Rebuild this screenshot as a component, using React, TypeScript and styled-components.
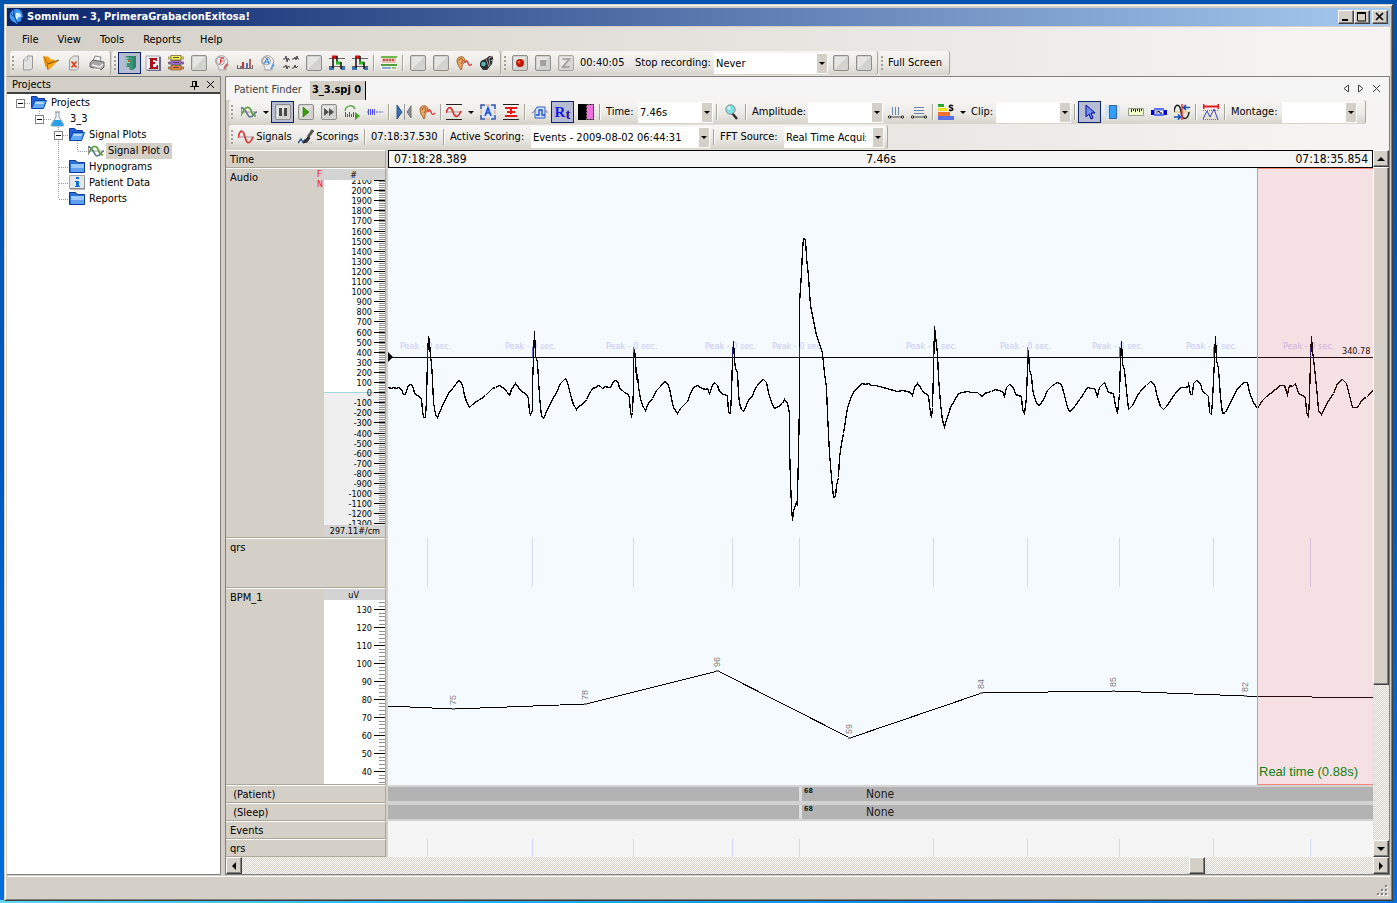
import React, { ReactNode } from 'react';
import styled, { createGlobalStyle, css } from 'styled-components';

const face = '#d4d0c8';
const shadow = '#808080';
const ui = '"DejaVu Sans Condensed", "DejaVu Sans", "Liberation Sans", sans-serif';

const Global = createGlobalStyle`
  *, *::before, *::after { box-sizing: border-box; }
  body { margin: 0; font-family: ${ui}; font-size: 11px; line-height: 14px; color: #000; }
  button, select { font: inherit; color: inherit; }
  ul { list-style: none; margin: 0; padding: 0; }
`;

/* ---------- window frame ---------- */

const Desktop = styled.div`
  min-height: 100vh;
  display: flex;
  padding: 4px 4px 2px;
  background:
    linear-gradient(90deg, #5fd8f5, #22b4f0 35%, #0a84ea 70%, #0070dc) bottom / 100% 3px no-repeat,
    linear-gradient(180deg, #0054b0, #0058c0 50%, #0070dc);
`;

const Window = styled.div`
  flex: 1;
  min-width: 0;
  display: flex;
  flex-direction: column;
  background: ${face};
  border: 1px solid;
  border-color: ${face} #404040 #404040 ${face};
  box-shadow: inset 1px 1px #fff, inset -1px -1px ${shadow};
  padding: 3px 2px 2px;
`;

const TitleBar = styled.header`
  display: flex;
  align-items: center;
  gap: 2px;
  height: 18px;
  padding: 0 2px;
  background: linear-gradient(90deg, #0a246a, #a6caf0);
`;

const Title = styled.h1`
  flex: 1;
  margin: 0;
  font-size: 11px;
  line-height: 14px;
  font-weight: 700;
  color: #fff;
`;

const raised = css`
  background: ${face};
  border: 1px solid;
  border-color: #fff #404040 #404040 #fff;
  box-shadow: inset -1px -1px ${shadow};
`;

const CaptionButton = styled.button<{ $apart?: boolean }>`
  ${raised}
  display: grid;
  place-items: center;
  width: 16px;
  height: 14px;
  padding: 0;
  margin-left: ${(p) => (p.$apart ? '0' : '-2px')};
`;

const Chrome = styled.div`
  background: linear-gradient(90deg, ${face}, #e6e4df 55%, #f5f4f2 95%);
  border-top: 1px solid ${face};
`;

const MenuBar = styled.nav`
  display: flex;
  align-items: center;
  gap: 1px;
  height: 24px;
  padding: 1px 6px 0;
`;

const MenuItem = styled.button`
  border: 0;
  background: none;
  padding: 4px 9px;
  line-height: 14px;
`;

/* ---------- tool strips ---------- */

const StripRow = styled.div`
  display: flex;
  gap: 1px;
  height: 25px;
  padding-left: 3px;
`;

const Strip = styled.div<{ $tail?: number }>`
  display: flex;
  align-items: center;
  height: 24px;
  padding: 0 ${(p) => p.$tail ?? 2}px 0 6px;
  border-radius: 3px;
  border-right: 1px solid #aaa79f;
  position: relative;
  background: linear-gradient(180deg, #f7f6f4, #eceae6 55%, #d6d3cb);
  &::before {
    content: '';
    position: absolute;
    left: 2px;
    top: 5px;
    width: 2px;
    height: 15px;
    background: repeating-linear-gradient(180deg, #a5a298 0 2px, transparent 2px 4px);
  }
`;

const ToolButton = styled.button<{ $on?: boolean; $w?: number }>`
  display: flex;
  align-items: center;
  justify-content: center;
  gap: 2px;
  flex: none;
  width: ${(p) => (p.$w ? p.$w + 'px' : '23px')};
  height: 22px;
  padding: 0;
  border: 1px solid ${(p) => (p.$on ? '#0a246a' : 'transparent')};
  background: ${(p) => (p.$on ? '#b6bdd2' : 'transparent')};
  white-space: nowrap;
`;

const Divider = styled.span`
  flex: none;
  width: 2px;
  height: 16px;
  margin: 0 2px;
  border-left: 1px solid #a5a298;
  border-right: 1px solid #fff;
`;

const Caption = styled.label<{ $w: number }>`
  flex: none;
  width: ${(p) => p.$w}px;
  padding-left: 3px;
  white-space: nowrap;
`;

const PickBox = styled.span<{ $w: number }>`
  flex: none;
  display: block;
  position: relative;
  width: ${(p) => p.$w}px;
  height: 21px;
  margin-right: 1px;
  background: #fff;
  &::after {
    content: '';
    position: absolute;
    right: 1px;
    top: 1px;
    width: 10px;
    height: 19px;
    background: ${face};
    pointer-events: none;
  }
  &::before {
    content: '';
    position: absolute;
    z-index: 1;
    right: 3px;
    top: 9px;
    border: 3px solid transparent;
    border-top-color: #000;
    border-bottom: 0;
    pointer-events: none;
  }
`;

const PickSelect = styled.select`
  appearance: none;
  display: block;
  width: 100%;
  height: 21px;
  padding: 1px 18px 0 2px;
  border: 0;
  border-radius: 0;
  background: transparent;
  overflow: hidden;
`;

const DropArrow = styled.i`
  border: 3px solid transparent;
  border-top-color: #000;
  border-bottom: 0;
  margin-left: 4px;
`;

const Pick = ({ id, w, value, label }: { id: string; w: number; value: string; label?: string }) => (
  <PickBox $w={w}>
    <PickSelect id={id} defaultValue={value} aria-label={label}>
      <option>{value}</option>
    </PickSelect>
  </PickBox>
);

/* ---------- icons ---------- */

const blank = (
  <g>
    <rect x="0.5" y="0.5" width="15" height="15" rx="1.5" fill="#d2d2d0" stroke="#8f8f8c" />
    <path d="M2 2h12L2 14z" fill="#e6e6e4" />
  </g>
);

const glyphs: Record<string, ReactNode> = {
  blank,
  page: (
    <g>
      <path d="M3.500 4.500l4-3.500h5v12l-2 2h-7z" fill="#e2e2e2" stroke="#9a9a9a" />
      <path d="M3.500 5h4V1" fill="#fff" stroke="#aaa" />
    </g>
  ),
  open: (
    <g>
      <path d="M0 1l6 1 1 2 5 1-7 9-3-3z" fill="#f59a10" />
      <path d="M4 9l12-4L6 15z" fill="#f7a81c" />
      <path d="M1 2l3 6 1 7" stroke="#b86400" fill="none" />
      <path d="M5 9l11-4" stroke="#5a3000" fill="none" strokeWidth=".8" />
    </g>
  ),
  closePage: (
    <g>
      <path d="M3.500 4.500l4-3.500h5v12l-2 2h-7z" fill="#e2e2e2" stroke="#9a9a9a" />
      <path d="M5.500 6.500l5 6M10.500 6.500l-5 6" stroke="#e04010" strokeWidth="1.700" />
    </g>
  ),
  printer: (
    <g>
      <path d="M4 6l2-5 6 1-1 5" fill="#f4f4f4" stroke="#888" />
      <path d="M1 8l3-3 11 2v5l-3 3-11-3z" fill="#a8a8a8" stroke="#666" />
      <path d="M3 10l8 2 3-3M5 14l6 1" stroke="#f0f0f0" fill="none" strokeWidth="1.500" />
    </g>
  ),
  book: (
    <g>
      <path d="M3 2l2-1h9v11l-3 3H9V4H3z" fill="#2f8068" />
      <path d="M3 2h8v13H8l-1-3H4z" fill="#3c9478" />
      <path d="M3 2v8l2 2V4l3-1z" fill="#8cc8b0" />
      <path d="M5 5h3v3H5z" fill="#9cd0a8" /><path d="M6 5h2v2H6z" fill="#e05030" />
    </g>
  ),
  boldE: (
    <g>
      <path d="M1 1h14v14H1z" fill="#f1eef4" stroke="#a6a2b8" />
      <path d="M14 2h2v14H2v-1h12z" fill="#6c6a8c" />
      <path d="M4 3h8v3h-1l-1-1H8v2h2v2H8v3h3l1-2h1v4H4v-1h1V4H4z" fill="#a8101c" />
    </g>
  ),
  bands: (
    <g>
      {[['#f4ee58', 1], ['#a06ad8', 6], ['#f08c40', 11]].map(([c, y]) => (
        <g key={String(y)}>
          <rect x="0" y={Number(y) + 1} width="16" height="2" fill={String(c)} stroke="#5a4a4a" strokeWidth=".5" />
          <rect x="3" y={Number(y) - 0.5} width="10" height="4.500" fill={String(c)} stroke="#6a5a30" strokeWidth=".7" />
          <path d={`M5 ${Number(y) + 1.5}h6`} stroke="#333" strokeWidth=".8" />
        </g>
      ))}
    </g>
  ),
  headRed: (
    <g fill="none" stroke="#a0a0a0">
      <path d="M12 15v-3l2-1-1-3 1-1C13 2 9 0 6 1 2 2 1 5 2 8c1 2 3 3 3 7z" fill="#eee" />
      <circle cx="6.500" cy="6" r="4" /><path d="M6 9l1-6h3M6 6h3" stroke="#e02020" />
      <path d="M10 14c2-3 1-4 4-5" stroke="#d06060" strokeWidth="2" />
    </g>
  ),
  headBlue: (
    <g fill="none" stroke="#a0a0a0">
      <path d="M12 15v-3l2-1-1-3 1-1C13 2 9 0 6 1 2 2 1 5 2 8c1 2 3 3 3 7z" fill="#eee" />
      <circle cx="6.500" cy="6" r="4" /><path d="M4 9l3-6 2 6M5 7h4" stroke="#2080d0" />
      <path d="M11 14c2-3 1-4 3-5" stroke="#60a8d8" strokeWidth="2" />
    </g>
  ),
  bars: (
    <g>
      <path d="M1 13.500h14" stroke="#707070" />
      <path d="M3 11h2v2H3z" fill="#777" /><path d="M5 7h2v6H5z" fill="#c83030" />
      <path d="M9 8h2v5H9z" fill="#5570b8" /><path d="M12 4h2v9h-2z" fill="#b86060" />
      <path d="M.500 10v4M15.500 10v4" stroke="#666" />
    </g>
  ),
  quadWave: (
    <path d="M0 4h2l1-3 1 6 1-4 1 2h1M9 4h2l1-2 1 3 1-4 1 3h1M0 12h2l1-2 1 4 1-3 1 1h1M9 13h2l1-3 1 3 2-2" stroke="#444" fill="none" />
  ),
  steps: (
    <g fill="none">
      <path d="M0 3.500h16M0 11.500h16" stroke="#666" />
      <path d="M0 13.500h5M12 13.500h4" stroke="#3a78b8" strokeWidth="3" />
      <path d="M4 13V2" stroke="#111" strokeWidth="1.500" />
      <path d="M3 2h5" stroke="#d01010" strokeWidth="3" />
      <path d="M8 1v7" stroke="#111" strokeWidth="1.500" />
      <path d="M7 8h5" stroke="#20c020" strokeWidth="3" />
      <path d="M12 7v7" stroke="#111" strokeWidth="1.500" />
    </g>
  ),
  calendar: (
    <g>
      <path d="M0 1h16v14H0z" fill="#f4f4e8" />
      <path d="M0 1h16v2H0z" fill="#70b850" /><path d="M1 3h14v5H1z" fill="#e8c0b0" />
      <path d="M2 5h12" stroke="#c05050" strokeWidth="2" strokeDasharray="2 1" />
      <path d="M0 9h16v2H0z" fill="#50a040" /><path d="M1 12h9v2H1z" fill="#88a8d8" /><path d="M11 12h4v2h-4z" fill="#90c070" />
    </g>
  ),
  ear: (
    <g fill="none">
      <path d="M5 15c-1-3-4-5-4-9 0-5 7-6 8-1 0 3-3 4-3 6s0 3-1 4z" fill="#e8a868" stroke="#a86028" />
      <path d="M3 6c0-3 4-3 4 0L5 9" stroke="#a05020" />
      <path d="M9 8c1-3 2-3 3 0s2 3 4 1" stroke="#e03030" strokeWidth="1.300" />
    </g>
  ),
  camera: (
    <g>
      <path d="M2 6l6-3 2-2h4v3l-1 5-5 6H4l-3-4z" fill="#303030" />
      <path d="M7 4l3 8M10 3l1 8" stroke="#999" />
      <circle cx="4.500" cy="9" r="3" fill="#58b0b0" stroke="#111" />
      <path d="M10 3l4-2M12 6l3-2" stroke="#bbb" />
    </g>
  ),
  record: (
    <g>
      {blank}
      <circle cx="8" cy="8" r="4" fill="#c01808" /><circle cx="7" cy="7" r="1.500" fill="#f06040" />
    </g>
  ),
  stop: <g>{blank}<path d="M5 5h6v6H5z" fill="#a2a2a2" /></g>,
  zed: <g opacity=".75">{blank}<path d="M4.500 4h7l-7 8h7" stroke="#808080" fill="none" strokeWidth="1.500" /></g>,
  signal: (
    <g fill="none" strokeWidth="1.700">
      <path d="M.500 3v9M0 8h16" stroke="#999" strokeWidth="1" />
      <path d="M0 4c5-1 6 9 9 9 4 0 4-5 7-5" stroke="#607890" />
      <path d="M1 10c3-8 7-8 9-4 1 4 3 6 5 6" stroke="#60a040" />
    </g>
  ),
  pause: <g>{blank}<path d="M4 4h3v8H4zM9 4h3v8H9z" fill="#4a4a4a" /></g>,
  play: <g>{blank}<path d="M5 3l6 5-6 5z" fill="#38a010" stroke="#207000" strokeWidth=".6" /></g>,
  forward: <g>{blank}<path d="M3 4l5 4-5 4zM8 4l5 4-5 4z" fill="#505050" /></g>,
  skip: (
    <g fill="none">
      <path d="M1 7c1-6 8-7 10-2" stroke="#60a850" strokeWidth="1.500" />
      <path d="M1.500 8v5M3.500 10v3M5.500 8v5M7.500 10v3M9.500 8v5" stroke="#555" />
      <path d="M11 8l5 4-5 4z" fill="#40a820" />
    </g>
  ),
  ticks: (
    <g>
      <path d="M0 8h16" stroke="#5050d0" strokeDasharray="2 1" />
      <path d="M1.500 5v6M3.500 5v6M5.500 5v6M7.500 5v6" stroke="#5050e0" />
    </g>
  ),
  mirror: (
    <g>
      <path d="M1 1l5 7-5 7z" fill="#3d70b0" stroke="#28508c" />
      <path d="M15 2v12l-4-6z" fill="#909090" stroke="#707070" /><path d="M8.500 0v16" stroke="#999" />
    </g>
  ),
  redWave: (
    <g fill="none">
      <path d="M0 .500h16M0 15.500h16" stroke="#222" />
      <path d="M0 8h16" stroke="#999" />
      <path d="M0 9c2-7 5-7 7-1s5 6 8-1" stroke="#d83030" strokeWidth="1.700" />
    </g>
  ),
  autoA: (
    <g>
      <path d="M1 1h14v14H1z" fill="#dce8fa" />
      <path d="M1 5V1h4M11 1h4v4M15 11v4h-4M5 15H1v-4" fill="none" stroke="#3050b0" strokeWidth="1.500" />
      <path d="M6 1h4M6 15h4M1 6v4M15 6v4" stroke="#e0a060" />
      <path d="M5 12l3-8 3 8M6 9h4" fill="none" stroke="#2050d0" strokeWidth="1.700" />
    </g>
  ),
  redFit: (
    <g fill="none" stroke="#e81818" strokeWidth="2">
      <path d="M0 .500h16M0 15.500h16" stroke="#222" strokeWidth="1" />
      <path d="M2 4h12M8 4v6M4 8h8M2 12h12" />
    </g>
  ),
  blueWave: (
    <g fill="none">
      <path d="M0 9c2 0 2-3 3-3s2 6 4 6 3-6 5-6 2 3 4 2" stroke="#777" />
      <path d="M5 3h8v11H3V6z" fill="#cfe0fa" stroke="#3060c0" />
      <path d="M4 11h3V6h3v5h3" stroke="#2050c0" strokeWidth="1.300" />
    </g>
  ),
  invert: (
    <g>
      <path d="M0 0h8v16H0z" /><path d="M8.500.500h7v15h-7z" fill="#f070e0" stroke="#000" strokeDasharray="2 1" />
    </g>
  ),
  magnifier: (
    <g>
      <path d="M8 9l5 6" stroke="#333" strokeWidth="2.500" />
      <circle cx="6.500" cy="5.500" r="4.700" fill="#80e0e8" stroke="#888" /><circle cx="5" cy="4" r="1.500" fill="#e0ffff" />
    </g>
  ),
  columns: (
    <g stroke="#6888b0" fill="none">
      <path d="M4.500 3v8M7.500 3v8M10.500 3v8" />
      <path d="M2 13h12" stroke="#444" /><circle cx="1.500" cy="13" r="1.200" stroke="#222" /><circle cx="14.500" cy="13" r="1.200" stroke="#222" />
    </g>
  ),
  lines: (
    <g stroke="#6888b0" fill="none">
      <path d="M3 3.500h10M3 6.500h10M3 9.500h10" />
      <path d="M2 13h12" stroke="#444" /><circle cx="1.500" cy="13" r="1.200" stroke="#222" /><circle cx="14.500" cy="13" r="1.200" stroke="#222" />
    </g>
  ),
  rankS: (
    <g>
      <path d="M0 0h6v3H0z" fill="#30a830" /><path d="M0 4h9v3H0z" fill="#f0e020" />
      <path d="M0 8h12v4H0z" fill="#f07030" /><path d="M0 12h16v4H0z" fill="#5870e8" />
      <path d="M15 2c-3-2-5 1-2 1.700 3 .8 2 3.800-2 2.300" stroke="#111" strokeWidth="1.600" fill="none" />
    </g>
  ),
  cursor: <path d="M4 1v12l3-3 2 5 2-1-2-5h4z" fill="#7090f0" stroke="#0000a0" />,
  selectArea: (
    <g>
      <path d="M0 1h15v14H0z" fill="#d0e4ff" />
      <path d="M4.500 1.500h7v13h-7z" fill="#30a0f8" stroke="#003" strokeDasharray="1 1" />
    </g>
  ),
  ruler: (
    <g>
      <path d="M.500 4.500h15v7H.500z" fill="#f0ffc8" stroke="#999" />
      <path d="M3.500 5v3M5.500 5v2M7.500 5v3M9.500 5v2M11.500 5v3M13.500 5v2" stroke="#222" />
    </g>
  ),
  blueBox: (
    <g>
      <path d="M0 6h16v5H0z" fill="#0000d0" /><path d="M3 4h10v8H3z" fill="#6070f0" /><path d="M4 6.500h8v3H4z" fill="#fff" />
      <path d="M5 8h2l1-1 1 2h2" stroke="#000" fill="none" />
    </g>
  ),
  swapWave: (
    <g fill="none">
      <path d="M0 8h16" stroke="#e8c060" />
      <path d="M0 8c1-9 6-9 7 0s7 8 8 0" stroke="#222" strokeWidth="1.500" />
      <path d="M8 0v16" stroke="#f03030" strokeWidth="1.500" />
      <path d="M9 3.500h7M12 1L9.500 3.500 12 6M0 13h6M4 10.500L6.500 13 4 15.500" stroke="#1050b8" strokeWidth="1.700" />
    </g>
  ),
  spanWave: (
    <g fill="none">
      <path d="M.500 0v5M15.500 0v5M1 2.500h14" stroke="#e02020" strokeWidth="2" />
      <path d="M0 15l4-8 3 6 4-8 4 11" stroke="#4040b0" /><path d="M0 6.500h16M0 15.500h16" stroke="#c05050" strokeDasharray="1 1" />
    </g>
  ),
  redSignal: (
    <g fill="none">
      <path d="M0 8h16" stroke="#999" /><path d="M0 9c2-9 5-9 7-1s5 7 8 0" stroke="#d84040" strokeWidth="1.900" />
    </g>
  ),
  brush: (
    <g fill="none">
      <path d="M0 14l3-4 2 3 3-3" stroke="#305890" strokeWidth="1.500" />
      <path d="M15 1l-5 7" stroke="#555" strokeWidth="3" /><path d="M10 8l-5 6 4-1 3-4z" fill="#333" stroke="#222" />
      <path d="M9 14h6" stroke="#d0a040" strokeDasharray="1 1" />
    </g>
  ),
  folder: (
    <g>
      <path d="M.500 1.500h6l2 2h7v10h-15z" fill="#2870e0" stroke="#0838a0" />
      <path d="M2 5h13v8H2z" fill="#9cc8fa" /><path d="M2 9h13v4H2z" fill="#60a0f0" />
    </g>
  ),
  folderOpen: (
    <g>
      <path d="M.500 12.500v-11h5l2 2h6v3" fill="#2060d8" stroke="#0838a0" />
      <path d="M4 5.500h11.500l-3 8H.500z" fill="#60a8f8" stroke="#0840b0" /><path d="M5 7h8l-1 2H4z" fill="#b0d8ff" />
    </g>
  ),
  flask: (
    <g>
      <path d="M6 1v5l-4.500 7c-.500 2 0 2 1 2h10c1 0 1.500 0 1-2L9 6V1" fill="#eef6fa" stroke="#8a98a0" />
      <path d="M4.500 9h6l3 5-1 1h-10l-1-1z" fill="#28a0e8" /><path d="M5 1h5" stroke="#888" />
    </g>
  ),
  info: (
    <g>
      <path d="M.500.500h15v13h-15z" fill="#e4e6ea" stroke="#a0a4a8" /><path d="M1 14h15V2" stroke="#777" fill="none" />
      <path d="M7 2h3v2H7zM6 6h4v5h1v1H6v-1h1V7H6z" fill="#1070e0" />
    </g>
  ),
  brain: (
    <g>
      <path d="M2 3C4-1 12-1 13 4l1 4-2 1v3l-3 1-1 2-5-3C0 9 0 6 2 3z" fill="#3c98f0" />
      <path d="M7 4c4-1 5 1 5 4-2-1-3 0-4 3-2-2-2-4-1-7z" fill="#d0ecff" />
      <path d="M5 1c-1 4 1 7 3 13M2 5l4 3" stroke="#103c90" fill="none" />
    </g>
  ),
};

const Icon = ({ name }: { name: string }) => (
  <svg width="16" height="16" viewBox="0 0 16 16" aria-hidden="true">{glyphs[name]}</svg>
);

const Tool = ({ icon, label, on }: { icon: string; label: string; on?: boolean }) => (
  <ToolButton type="button" aria-label={label} $on={on}><Icon name={icon} /></ToolButton>
);

const Split = ({ icon, label }: { icon: string; label: string }) => (
  <ToolButton type="button" aria-label={label} $w={32}><Icon name={icon} /><DropArrow /></ToolButton>
);

const RtMark = styled.span`
  font: bold 15px/16px "Liberation Serif", serif;
  color: #1818e0;
  sub { font-size: 15px; line-height: 0; vertical-align: -2px; color: #301898; }
`;

/* ---------- work area ---------- */

const Work = styled.main`
  flex: 1;
  display: flex;
  gap: 4px;
  min-height: 0;
`;

const Side = styled.aside`
  flex: none;
  width: 214px;
  display: flex;
  flex-direction: column;
  border: 1px solid ${shadow};
  border-left: 0;
  background: #fff;
`;

const SideHead = styled.div`
  display: flex;
  align-items: center;
  gap: 4px;
  height: 17px;
  padding: 0 4px 0 5px;
  background: ${face};
  border-bottom: 2px solid #404040;
  h2 { flex: 1; margin: 0; font-size: 11px; line-height: 14px; font-weight: 400; }
`;

const GhostButton = styled.button`
  display: grid;
  place-items: center;
  width: 12px;
  height: 12px;
  padding: 0;
  border: 0;
  background: none;
`;

const Tree = styled.ul`
  flex: 1;
  padding: 1px 0 0 9px;
`;

const TreeRow = styled.li`
  display: flex;
  align-items: center;
  height: 16px;
  svg { margin-left: -4px; flex: none; }
`;

const dots = (dir: string) => `repeating-linear-gradient(${dir}, #a0a0a0 0 1px, transparent 1px 2px)`;

const Guide = styled.span<{ $v?: 'full' | 'half'; $h?: boolean }>`
  flex: none;
  align-self: stretch;
  display: flex;
  align-items: center;
  width: 19px;
  background:
    ${(p) => (p.$v ? dots('180deg') : 'none')} 4px 0 / 1px ${(p) => (p.$v === 'full' ? '16px' : '8px')} no-repeat,
    ${(p) => (p.$h ? dots('90deg') : 'none')} 5px 8px / 12px 1px no-repeat;
`;

const Toggle = styled.button`
  width: 9px;
  height: 9px;
  padding: 0;
  border: 1px solid #848484;
  background: linear-gradient(#000, #000) center / 5px 1px no-repeat, #fff;
`;

const NodeName = styled.span<{ $sel?: boolean }>`
  padding: 1px 2px;
  margin-left: 2px;
  line-height: 14px;
  background: ${(p) => (p.$sel ? face : 'transparent')};
`;

type Node = { name: string; icon: string; guides: ('' | 'full' | 'half')[]; open?: boolean; sel?: boolean };
const nodes: Node[] = [
  { name: 'Projects', icon: 'folderOpen', guides: [''], open: true },
  { name: '3_3', icon: 'flask', guides: ['', 'half'], open: true },
  { name: 'Signal Plots', icon: 'folderOpen', guides: ['', '', 'full'], open: true },
  { name: 'Signal Plot 0', icon: 'signal', guides: ['', '', 'full', 'half'], sel: true },
  { name: 'Hypnograms', icon: 'folder', guides: ['', '', 'full'] },
  { name: 'Patient Data', icon: 'info', guides: ['', '', 'full'] },
  { name: 'Reports', icon: 'folder', guides: ['', '', 'half'] },
];

const Doc = styled.section`
  flex: 1;
  min-width: 0;
  display: flex;
  flex-direction: column;
  border: 1px solid ${shadow};
  background: linear-gradient(90deg, ${face}, #e6e4df 50%, #f5f4f2 95%);
`;

const Tabs = styled.div`
  display: flex;
  align-items: flex-end;
  gap: 3px;
  height: 23px;
  padding-left: 6px;
  background: #f5f5f5;
`;

const Tab = styled.button<{ $on?: boolean }>`
  height: 19px;
  padding: 0 4px 2px 2px;
  border: 0;
  border-right: 1px solid ${(p) => (p.$on ? '#000' : 'transparent')};
  background: ${(p) => (p.$on ? face : 'transparent')};
  font-weight: ${(p) => (p.$on ? 700 : 400)};
  color: ${(p) => (p.$on ? '#000' : '#404040')};
`;

const TabTools = styled.div`
  display: flex;
  gap: 3px;
  margin-left: auto;
  padding: 0 7px 6px 0;
`;

const Viewer = styled.div`
  flex: 1;
  display: grid;
  grid-template-columns: 162px minmax(0, 1fr) 16px;
  grid-template-rows: 707px 17px;
  align-content: start;
`;

const Labels = styled.div`
  display: flex;
  flex-direction: column;
  border-right: 2px solid ${face};
`;

const LabelRow = styled.div<{ $h: number }>`
  display: flex;
  height: ${(p) => p.$h}px;
  border-top: 1px solid #fff;
  border-bottom: 1px solid #aca899;
  border-right: 1px solid #aca899;
  background: ${face};
  span { flex: 1; padding: 2px 4px 0; white-space: pre; }
  svg { flex: none; }
`;

const Flags = styled.div`
  width: 7px;
  font-size: 9px;
  line-height: 10px;
  color: #f02020;
`;

const Plot = styled.div`
  display: flex;
  flex-direction: column;
  min-width: 0;
`;

const TimeAxis = styled.div`
  display: flex;
  justify-content: space-between;
  align-items: center;
  height: 18px;
  padding: 0 4px 0 5px;
  border: 1px solid #000;
  background: #f5f5f5;
  font-size: 12px;
`;

const Canvas = styled.div`
  position: relative;
  height: 617px;
  background: #f5faff;
  overflow: hidden;
  > svg { display: block; width: 100%; height: 617px; }
`;

const RealTime = styled.div`
  position: absolute;
  top: 0;
  right: 0;
  bottom: 0;
  width: 116px;
  display: flex;
  align-items: flex-end;
  padding: 0 1px 4px;
  border: 1px solid #f58878;
  border-right: 0;
  background: rgba(245, 83, 68, 0.15);
  font: 13px/16px "Liberation Sans", Arial, sans-serif;
  color: #108010;
  white-space: nowrap;
`;

const Stage = styled.div`
  display: flex;
  align-items: center;
  height: 18px;
  border: solid #d3d3d3;
  border-width: 2px 0;
  background: linear-gradient(#dedede, #dedede) 411px 0 / 3px 100% no-repeat, #b3b3b3;
  font-size: 12px;
  color: #202020;
  small { align-self: flex-start; font: bold 7px/8px ${ui}; padding-left: 416px; width: 478px; }
`;

const EventLane = styled.div`
  height: 18px;
  background: #f5f5f5;
  svg { display: block; width: 100%; height: 18px; }
`;

const checker = css`
  background: repeating-conic-gradient(#fff 0 25%, ${face} 0 50%) 0 0 / 2px 2px;
`;

const VScroll = styled.div`
  ${checker}
  display: flex;
  flex-direction: column;
`;

const HScroll = styled.div`
  ${checker}
  grid-column: 1 / -1;
  display: flex;
`;

const ScrollButton = styled.button`
  ${raised}
  flex: none;
  display: grid;
  place-items: center;
  width: 16px;
  height: 17px;
  padding: 0;
`;

const Thumb = styled.div<{ $grow?: number }>`
  ${raised}
  flex: ${(p) => p.$grow ?? 'none'};
  width: 16px;
`;

const Track = styled.div<{ $grow: number }>`
  flex: ${(p) => p.$grow};
`;

const StatusBar = styled.footer`
  display: flex;
  align-items: flex-end;
  justify-content: flex-end;
  height: 22px;
  margin-top: 1px;
  border-top: 1px solid #fff;
`;

const Arrow = ({ d }: { d: string }) => (
  <svg width="8" height="8" viewBox="0 0 8 8" aria-hidden="true"><path d={d} /></svg>
);

/* ---------- signal data (screen units of the recorder) ---------- */

const OX = 388;
const OY = 168;

const ecg = `388,387 391,388 393,387 396,388 398,387 401,389 403,394 405,394 407,387 409,384 411,384 413,388 414,393 417,395 420,397 421,399
422,410 423,417 425,417 426,400 427,357 428,336 429,340 430,357 431,362 432,380 433,402 435,414 437,417 439,412 443,403 448,393 453,387 458,380
461,382 463,389 464,395 466,401 469,407 472,404 476,401 481,398 485,395 489,391 492,388 495,387 499,385 502,387 505,389 508,394 509,395 511,389
515,383 518,387 520,390 523,392 526,394 528,398 529,412 530,414 532,410 532,385 533,357 534,331 535,355 537,362 538,380 539,395 540,407 541,415
543,418 544,417 545,413 548,407 552,399 556,392 560,383 565,378 567,382 569,390 571,398 573,404 576,409 578,406 582,404 586,399 589,393 592,388
595,387 598,385 600,386 602,388 605,386 608,387 610,387 613,381 615,380 618,382 619,388 622,390 624,392 628,394 629,398 630,412 631,415 632,412
633,387 633,357 634,349 635,360 636,379 637,374 638,387 640,398 642,405 645,410 648,403 652,398 656,390 660,386 664,381 667,383 669,388 671,398
673,407 677,413 680,408 683,405 687,401 690,393 693,387 697,385 700,387 702,388 705,389 707,388 709,393 712,385 714,382 717,385 719,391 723,394
727,395 728,412 730,413 731,393 732,358 733,341 734,360 735,368 737,372 738,393 739,403 741,409 743,411 745,407 748,400 752,395 755,388 758,383
763,379 766,382 768,392 771,402 774,408 778,406 782,403 784,399 787,403 789,413 789,447 790,480 791,506 792,520 793,510 796,502 797,505 797,493
798,455 799,400 799,303 801,273 802,250 803,238 805,239 806,257 808,275 809,292 810,305 813,320 816,335 819,343 822,353 824,373 826,387 827,413
828,433 829,453 831,477 832,487 833,497 835,496 836,485 838,477 839,457 841,443 843,433 845,420 847,408 850,398 853,392 857,387 862,383 865,384
868,383 871,385 875,385 879,386 883,387 886,388 890,389 893,390 897,391 902,390 907,391 910,392 912,395 914,387 917,383 920,387 923,392 925,393
928,395 929,405 931,417 932,407 933,370 934,326 935,335 937,353 938,377 940,403 942,420 944,426 946,420 950,407 954,400 958,393 962,392 967,391
971,392 977,392 979,394 982,396 984,393 987,392 991,391 995,389 998,390 1002,391 1004,396 1006,387 1009,384 1013,387 1015,394 1018,395 1021,396
1022,409 1024,413 1026,397 1027,367 1028,350 1029,370 1031,375 1032,388 1034,397 1037,404 1039,405 1043,399 1047,390 1052,385 1057,382 1061,384
1064,395 1067,407 1069,411 1072,409 1077,402 1082,395 1087,387 1091,388 1094,388 1097,396 1099,387 1104,382 1108,392 1113,393 1115,405 1117,413
1119,393 1120,360 1121,341 1122,363 1124,370 1126,390 1128,409 1132,405 1137,395 1142,388 1146,385 1150,381 1154,384 1157,397 1160,406 1163,409
1166,406 1170,400 1177,390 1181,387 1185,387 1188,386 1188,382 1190,394 1192,394 1193,383 1196,380 1200,383 1202,391 1205,393 1208,396 1209,412
1211,414 1212,400 1214,360 1215,336 1216,360 1218,368 1220,397 1222,413 1225,412 1231,400 1236,390 1241,384 1244,382 1247,382 1249,392 1253,402
1257,408 1262,400 1266,396 1270,393 1275,389 1280,385 1284,385 1287,394 1289,385 1292,386 1295,383 1298,393 1302,395 1305,397 1306,412 1308,416
1309,397 1310,360 1311,336 1312,350 1314,367 1317,397 1318,410 1321,414 1327,402 1333,393 1337,383 1342,379 1346,383 1349,395 1352,407 1357,407
1360,402 1363,398 1366,397 1368,395 1373,389`;

const beats = [427, 532, 633, 732, 799, 933, 1027, 1119, 1213, 1310];
const bpm: [number, number, number][] = [
  [454, 709, 75], [586, 704, 78], [718, 671, 96], [850, 738, 59], [982, 693, 84], [1114, 691, 85], [1246, 696, 82],
];
const bpmPath = '388,706 ' + bpm.map(([x, y]) => `${x},${y}`).join(' ') + ' 1378,698 1600,700';

const range = (n: number) => Array.from({ length: n }, (_, i) => i);

const AudioScale = () => (
  <svg width="61" height="368" fontSize="9" textAnchor="end" shapeRendering="crispEdges">
    <rect width="61" height="224" fill="#fff" />
    <rect y="224" width="61" height="144" fill="#efefef" />
    <path d="M0 223.500h50" stroke="#a0d4e0" />
    {range(176).map((i) => (
      <path key={i} d={`M55 ${12.5 + i * 2}h6`} stroke="#909090" />
    ))}
    {range(35).map((i) => {
      const y = Math.round(11 + i * 10.1);
      return (
        <g key={i}>
          <path d={`M50 ${y + 0.5}h11`} stroke="#000" />
          <text x="48" y={y + 4}>{2100 - i * 100}</text>
        </g>
      );
    })}
    <rect width="61" height="11" fill="#d3d3d3" />
    <text x="33" y="9">#</text>
    <rect y="356" width="61" height="12" fill="#d3d3d3" />
    <text x="56" y="365">297.11#/cm</text>
  </svg>
);

const BpmScale = () => (
  <svg width="61" height="195" fontSize="9" textAnchor="end" shapeRendering="crispEdges">
    <rect width="61" height="195" fill="#fff" />
    {range(51).map((i) => (
      <path key={i} d={`M55 ${Math.round(13 + i * 3.6) + 0.5}h6`} stroke="#909090" />
    ))}
    {range(10).map((i) => (
      <g key={i}>
        <path d={`M50 ${20.5 + i * 18}h11`} stroke="#000" />
        <text x="48" y={24 + i * 18}>{130 - i * 10}</text>
      </g>
    ))}
    <rect width="61" height="11" fill="#d3d3d3" />
    <text x="35" y="9">uV</text>
  </svg>
);

export default function App() {
  return (
    <>
      <Global />
      <Desktop>
        <Window>
          <TitleBar>
            <Icon name="brain" />
            <Title>Somnium - 3, PrimeraGrabacionExitosa!</Title>
            <CaptionButton type="button" aria-label="Minimize"><svg width="10" height="10"><path d="M1 7h6v2H1z" /></svg></CaptionButton>
            <CaptionButton type="button" aria-label="Maximize"><svg width="10" height="10"><path d="M.500 1h8v8h-8z" fill="none" stroke="#000" /><path d="M0 0h9v2H0z" /></svg></CaptionButton>
            <CaptionButton type="button" aria-label="Close" $apart><svg width="10" height="10"><path d="M1 1l7 7M8 1L1 8" stroke="#000" strokeWidth="1.600" /></svg></CaptionButton>
          </TitleBar>
          <Chrome>
            <MenuBar>
              {['File', 'View', 'Tools', 'Reports', 'Help'].map((m) => <MenuItem key={m} type="button">{m}</MenuItem>)}
            </MenuBar>
            <StripRow>
              <Strip>
                <Tool icon="page" label="New" /><Tool icon="open" label="Open" />
                <Tool icon="closePage" label="Close project" /><Tool icon="printer" label="Print" />
              </Strip>
              <Strip>
                <Tool icon="book" label="Projects" on /><Tool icon="boldE" label="Events" />
                <Tool icon="bands" label="Channels" /><Tool icon="blank" label="Window" />
                <Tool icon="headRed" label="Frequency map" /><Tool icon="bars" label="Spectrum" />
                <Tool icon="headBlue" label="Amplitude map" /><Tool icon="quadWave" label="Traces" />
                <Tool icon="blank" label="Panel" /><Tool icon="steps" label="Hypnogram" />
                <Tool icon="steps" label="Edit hypnogram" />
                <Divider /><Tool icon="calendar" label="Schedule" /><Divider />
                <Tool icon="blank" label="Input" /><Tool icon="blank" label="Output" />
                <Tool icon="ear" label="Listen" /><Tool icon="camera" label="Camera" />
              </Strip>
              <Strip>
                <Tool icon="record" label="Record" /><Tool icon="stop" label="Stop" /><Tool icon="zed" label="Impedance" />
                <Caption as="span" $w={55}>00:40:05</Caption>
                <Caption htmlFor="stop-rec" $w={82}>Stop recording:</Caption>
                <Pick id="stop-rec" w={114} value="Never" />
                <Tool icon="blank" label="Previous" /><Tool icon="blank" label="Next" />
              </Strip>
              <Strip $tail={4}><ToolButton type="button" $w={60}>Full Screen</ToolButton></Strip>
            </StripRow>
          </Chrome>
          <Work>
            <Side>
              <SideHead>
                <h2>Projects</h2>
                <GhostButton type="button" aria-label="Pin"><svg width="9" height="10"><path d="M2.500 6V1.500h4M5.500 1v5M6.500 1v5M0 6.500h9M4.500 6v4" fill="none" stroke="#000" /></svg></GhostButton>
                <GhostButton type="button" aria-label="Close panel"><svg width="9" height="9"><path d="M1 1l7 7M8 1L1 8" stroke="#000" /></svg></GhostButton>
              </SideHead>
              <Tree>
                {nodes.map((n) => (
                  <TreeRow key={n.name}>
                    {n.guides.map((g, i) => {
                      const own = i === n.guides.length - 1;
                      return (
                        <Guide key={i} $v={g || undefined} $h={own}>
                          {own && n.open && <Toggle type="button" aria-label={`Collapse ${n.name}`} />}
                        </Guide>
                      );
                    })}
                    <Icon name={n.icon} />
                    <NodeName $sel={n.sel}>{n.name}</NodeName>
                  </TreeRow>
                ))}
              </Tree>
            </Side>
            <Doc>
              <Tabs>
                <Tab type="button">Patient Finder</Tab>
                <Tab type="button" $on>3_3.spj 0</Tab>
                <TabTools>
                  <GhostButton type="button" aria-label="Scroll left"><svg width="8" height="9"><path d="M6.500 1v7L2 4.500z" fill="none" stroke="#444" /></svg></GhostButton>
                  <GhostButton type="button" aria-label="Scroll right"><svg width="8" height="9"><path d="M1.500 1v7L6 4.500z" fill="none" stroke="#444" /></svg></GhostButton>
                  <GhostButton type="button" aria-label="Close tab"><svg width="9" height="9"><path d="M1 1l7 7M8 1L1 8" stroke="#444" /></svg></GhostButton>
                </TabTools>
              </Tabs>
              <StripRow>
                <Strip $tail={7}>
                  <ToolButton as="span" $w={4} />
                  <Split icon="signal" label="Signals view" />
                  <Tool icon="pause" label="Pause" on /><Tool icon="play" label="Play" /><Tool icon="forward" label="Fast forward" />
                  <Tool icon="skip" label="Skip to event" /><Tool icon="ticks" label="Markers" /><Divider />
                  <Tool icon="mirror" label="Mirror" /><Tool icon="ear" label="Listen to signal" /><Divider />
                  <Split icon="redWave" label="Scaling" />
                  <Tool icon="autoA" label="Auto scale" /><Tool icon="redFit" label="Fit" /><Divider />
                  <Tool icon="blueWave" label="Filter" />
                  <ToolButton type="button" $on><RtMark>R<sub>t</sub></RtMark></ToolButton>
                  <Tool icon="invert" label="Invert colours" /><Divider />
                  <Caption htmlFor="time" $w={35}>Time:</Caption><Pick id="time" w={75} value="7.46s" /><Divider />
                  <Tool icon="magnifier" label="Zoom" /><Divider />
                  <Caption htmlFor="amp" $w={59}>Amplitude:</Caption><Pick id="amp" w={75} value="" />
                  <Tool icon="columns" label="Vertical grid" /><Tool icon="lines" label="Horizontal grid" /><Divider />
                  <Split icon="rankS" label="Sort" />
                  <Caption htmlFor="clip" $w={28}>Clip:</Caption><Pick id="clip" w={75} value="" /><Divider />
                  <Tool icon="cursor" label="Pointer" on /><Tool icon="selectArea" label="Select" /><Tool icon="ruler" label="Measure" />
                  <Tool icon="blueBox" label="Annotate" /><Tool icon="swapWave" label="Shift" /><Divider />
                  <Tool icon="spanWave" label="Span" /><Divider />
                  <Caption htmlFor="montage" $w={54}>Montage:</Caption><Pick id="montage" w={75} value="" />
                </Strip>
              </StripRow>
              <StripRow>
                <Strip>
                  <ToolButton type="button" $w={60}><Icon name="redSignal" />Signals</ToolButton>
                  <ToolButton type="button" $w={67}><Icon name="brush" />Scorings</ToolButton>
                  <Divider />
                  <Caption as="span" $w={73}>07:18:37.530</Caption><Divider />
                  <Caption htmlFor="scoring" $w={84}>Active Scoring:</Caption>
                  <Pick id="scoring" w={179} value="Events - 2009-08-02 06:44:31" /><Divider />
                  <Caption htmlFor="fft" $w={67}>FFT Source:</Caption>
                  <Pick id="fft" w={100} value="Real Time Acquisition" />
                </Strip>
              </StripRow>
              <Viewer>
                <Labels>
                  <LabelRow $h={18}><span>Time</span></LabelRow>
                  <LabelRow $h={370}><span>Audio</span><Flags>F<br />N</Flags><AudioScale /></LabelRow>
                  <LabelRow $h={50}><span>qrs</span></LabelRow>
                  <LabelRow $h={197}><span>BPM_1</span><BpmScale /></LabelRow>
                  <LabelRow $h={18}><span> (Patient)</span></LabelRow>
                  <LabelRow $h={18}><span> (Sleep)</span></LabelRow>
                  <LabelRow $h={18}><span>Events</span></LabelRow>
                  <LabelRow $h={18}><span>qrs</span></LabelRow>
                </Labels>
                <Plot>
                  <TimeAxis><span>07:18:28.389</span><span>7.46s</span><span>07:18:35.854</span></TimeAxis>
                  <Canvas>
                    <svg fill="none">
                      <g transform={`translate(${-OX} ${-OY})`} fontSize="9">
                        {beats.map((x) => (
                          <g key={x}>
                            <text x={x - 27} y="349" fill="#c8c8fa">Peak - 0 sec.</text>
                            <path d={`M${x + 0.5} 538v49`} stroke="#d6d6f6" />
                          </g>
                        ))}
                        <g shapeRendering="crispEdges" stroke="#000">
                          <path d="M388 357.500H2000" />
                          <polyline points={ecg} transform="translate(.5 .5)" strokeWidth="1.300" />
                          <polyline points={bpmPath} />
                        </g>
                        {beats.map((x) => <path key={x} d={`M${x + 0.5} 347v11`} stroke="#3030c0" opacity=".7" />)}
                        <path d="M388 352l5 5-5 5z" fill="#000" />
                        <text x="1342" y="354" fill="#000">340.78</text>
                        {bpm.map(([x, y, v]) => (
                          <g key={x} fill="#808080">
                            <rect x={x - 2} y={y - 1} width="3" height="2" />
                            <text transform={`translate(${x + 2} ${y - 4}) rotate(-90)`} fontFamily="Liberation Sans">{v}</text>
                          </g>
                        ))}
                      </g>
                    </svg>
                    <RealTime>Real time (0.88s)</RealTime>
                  </Canvas>
                  <Stage><small>68</small>None</Stage>
                  <Stage><small>68</small>None</Stage>
                  <EventLane />
                  <EventLane>
                    <svg>{beats.map((x) => <path key={x} d={`M${x - OX + 0.5} 0v18`} stroke="#d6d6f6" />)}</svg>
                  </EventLane>
                </Plot>
                <VScroll>
                  <ScrollButton type="button" aria-label="Up"><Arrow d="M0 6l4-4 4 4z" /></ScrollButton>
                  <Thumb $grow={518} /><Track $grow={156} />
                  <ScrollButton type="button" aria-label="Down"><Arrow d="M0 2h8L4 6z" /></ScrollButton>
                </VScroll>
                <HScroll>
                  <ScrollButton type="button" aria-label="Left"><Arrow d="M6 0v8L2 4z" /></ScrollButton>
                  <Track $grow={947} /><Thumb /><Track $grow={168} />
                  <ScrollButton type="button" aria-label="Right"><Arrow d="M2 0v8l4-4z" /></ScrollButton>
                </HScroll>
              </Viewer>
            </Doc>
          </Work>
          <StatusBar>
            <svg width="14" height="14" aria-hidden="true">
              {[[9, 1], [5, 5], [9, 5], [1, 9], [5, 9], [9, 9]].map(([x, y]) => (
                <g key={`${x}-${y}`}><rect x={x + 1} y={y + 1} width="2" height="2" fill="#fff" /><rect x={x} y={y} width="2" height="2" fill="#808080" /></g>
              ))}
            </svg>
          </StatusBar>
        </Window>
      </Desktop>
    </>
  );
}
